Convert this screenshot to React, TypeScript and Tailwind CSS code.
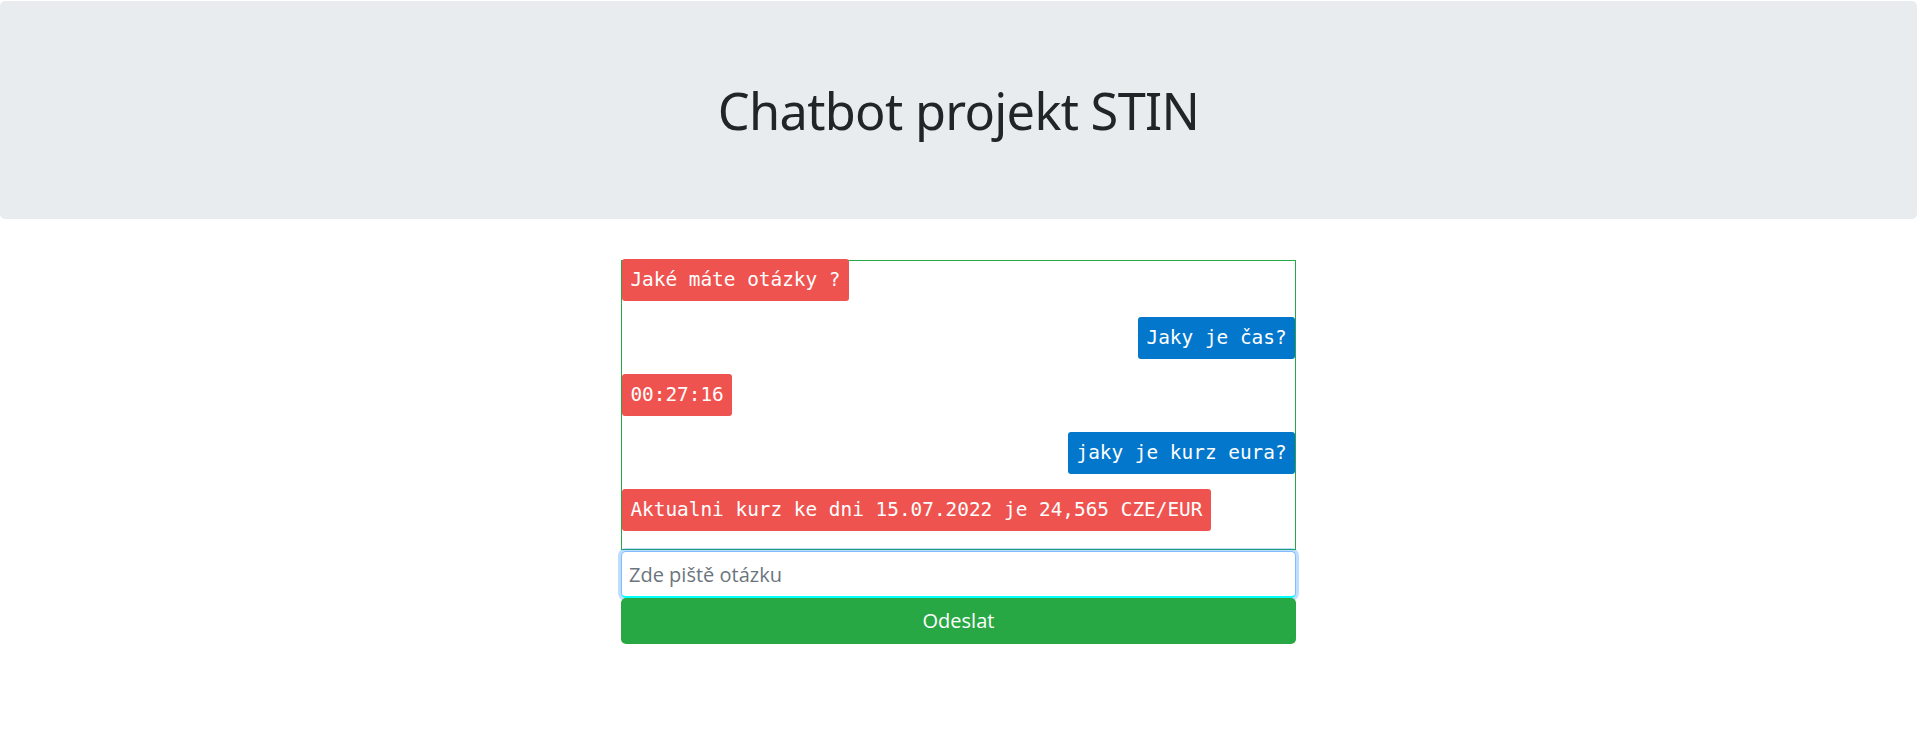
import React from "react";

type Msg = { from: "bot" | "user"; text: string };

const messages: Msg[] = [
  { from: "bot", text: "Jaké máte otázky ?" },
  { from: "user", text: "Jaky je čas?" },
  { from: "bot", text: "00:27:16" },
  { from: "user", text: "jaky je kurz eura?" },
  { from: "bot", text: "Aktualni kurz ke dni 15.07.2022 je 24,565 CZE/EUR" },
];

export default function App() {
  return (
    <div className="min-h-screen bg-white font-['Open_Sans',sans-serif] text-[#212529]">
      {/* Jumbotron */}
      <div className="mt-px h-[218px] bg-[#e9ecef] rounded-[5px] flex items-center justify-center">
        <h1 className="font-['Noto_Sans',sans-serif] text-[50.5px] font-normal leading-none tracking-[-0.7px] mb-[-2px]">
          Chatbot projekt STIN
        </h1>
      </div>

      <div className="w-[675px] mx-auto mt-[41px]">
        {/* Chat window */}
        <div className="border border-[#28a745] flex flex-col pb-[2.5px]">
          {messages.map((m, i) => (
            <div
              key={i}
              className={
                (i === 0 ? "-mt-[2px] " : "") +
                (m.from === "bot"
                  ? "self-start h-[42px] mb-[15.5px] px-[8.4px] flex items-center rounded-[3px] bg-[#ef5350] text-white font-['DejaVu_Sans_Mono',monospace] text-[19.4px] whitespace-pre"
                  : "self-end h-[42px] mb-[15.5px] px-[8.4px] flex items-center rounded-[3px] bg-[#0277cc] text-white font-['DejaVu_Sans_Mono',monospace] text-[19.4px] whitespace-pre")
              }
            >
              {m.text}
            </div>
          ))}
        </div>

        <input
          autoFocus
          type="text"
          placeholder="Zde piště otázku"
          className="block w-full mt-[1px] h-[47px] px-[7px] text-[20px] bg-white border border-[#80bdff] border-b-2 border-b-[#00ffff] rounded-[5px] shadow-[0_0_0_3px_rgba(0,123,255,0.25)] outline-none placeholder:text-[#6c757d]"
        />

        <button className="block w-full h-[46px] rounded-[5px] bg-[#28a745] text-white text-[20px] leading-none">
          Odeslat
        </button>
      </div>
    </div>
  );
}
